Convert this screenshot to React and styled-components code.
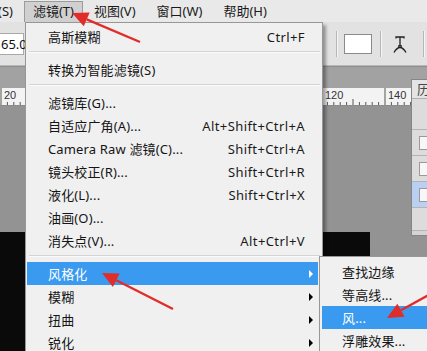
import React from "react";
import styled, { createGlobalStyle } from "styled-components";

const GlobalStyle = createGlobalStyle`
  html, body {
    margin: 0;
    padding: 0;
    overflow: hidden;
  }
  body {
    font-family: "Noto Sans", "Noto Sans CJK SC", sans-serif;
    font-size: 13px;
    color: #111;
  }
`;

const Screen = styled.div`
  position: relative;
  width: 427px;
  height: 351px;
  overflow: hidden;
  display: flex;
  flex-direction: column;
  background: #939393;
`;

const MenuBar = styled.div`
  display: flex;
  align-items: flex-end;
  height: 22px;
  background: #e9e9e9;
  margin-left: -37px;
  flex-shrink: 0;
`;

const MenuTitle = styled.div`
  height: 20px;
  line-height: 19px;
  padding: 0 8px;
  margin-right: ${(p) => p.$gap || 2}px;
  border: 1px solid ${(p) => (p.$active ? "#9c9c9c" : "transparent")};
  border-bottom: none;
  background: ${(p) => (p.$active ? "#d0d0d0" : "transparent")};
  color: #1a1a1a;
  white-space: nowrap;
`;

const OptionsBar = styled.div`
  display: flex;
  align-items: center;
  height: 44px;
  background: #e2e2e2;
  border-bottom: 1px solid #b9b9b9;
  flex-shrink: 0;
  box-sizing: border-box;
`;

const NumField = styled.div`
  width: 30px;
  height: 22px;
  margin-left: -6px;
  background: #fff;
  border: 1px solid #a9a9a9;
  line-height: 21px;
  padding-left: 6px;
  box-sizing: border-box;
  font-size: 13px;
`;

const RightTools = styled.div`
  margin-left: auto;
  display: flex;
  align-items: center;
  margin-right: 2px;
`;

const Divider = styled.div`
  width: 1px;
  height: 26px;
  background: #b6b6b6;
  border-right: 1px solid #f4f4f4;
  margin-right: ${(p) => p.$mr || 0}px;
`;

const Swatch = styled.div`
  width: 28px;
  height: 20px;
  margin: 0 8px 0 6px;
  background: #fff;
  border: 1px solid #8b8b8b;
  box-sizing: border-box;
`;

const IconSlot = styled.div`
  display: flex;
  margin: 0 16px 0 11px;
`;

const TabStrip = styled.div`
  height: 22px;
  background: #a2a2a2;
  border-top: 1px solid #8d8d8d;
  box-sizing: border-box;
  flex-shrink: 0;
`;

const Ruler = styled.div`
  position: relative;
  height: 18px;
  background: #f3f3f3;
  border-bottom: 1px solid #8a8a8a;
  box-sizing: border-box;
  flex-shrink: 0;
`;

const RulerLabel = styled.span`
  position: absolute;
  top: 1px;
  font-family: "Liberation Sans", sans-serif;
  font-size: 11px;
  color: #333;
`;

const Canvas = styled.div`
  flex: 1;
  display: flex;
  flex-direction: column;
  padding-top: 126px;
  background: #939393;
`;

const Document = styled.div`
  width: 370px;
  flex: 1;
  background: #0a0a0a;
`;

const FloatPanel = styled.div`
  position: absolute;
  left: 411px;
  top: 79px;
  width: 24px;
  height: 155px;
  background: #d4d4d4;
  border: 1px solid #868686;
  display: flex;
  flex-direction: column;
`;

const PanelHead = styled.div`
  height: 18px;
  line-height: 18px;
  padding-left: 5px;
  background: #e4e4e4;
  border-bottom: 1px solid #b0b0b0;
  color: #444;
`;

const PanelRow = styled.div`
  height: ${(p) => p.$h || 25}px;
  border-bottom: 1px solid #b4b4b4;
  background: ${(p) => (p.$sel ? "#b9d0f2" : "#dcdcdc")};
  display: flex;
  align-items: center;
  padding-left: 7px;
`;

const PanelBox = styled.div`
  width: 12px;
  height: 12px;
  background: #f7f7f7;
  border: 1px solid #9a9a9a;
`;

const Menu = styled.div`
  position: absolute;
  left: ${(p) => p.$left}px;
  top: ${(p) => p.$top}px;
  width: ${(p) => p.$width}px;
  height: 400px;
  background: #f0f0f0;
  border: 1px solid #979797;
  box-shadow: 3px 3px 3px rgba(0, 0, 0, 0.35);
  padding: ${(p) => p.$pad}px 0;
  box-sizing: border-box;
  z-index: 2;
`;

const Item = styled.div`
  height: 23px;
  display: flex;
  align-items: center;
  margin: 0 4px 0 ${(p) => p.$ml || 1}px;
  padding: 0 0 0 ${(p) => p.$pl || 21}px;
  background: ${(p) => (p.$hot ? "#3a9af0" : "transparent")};
  color: ${(p) => (p.$hot ? "#fff" : "#151515")};
  white-space: nowrap;
`;

const Label = styled.span`
  flex: 1;
  letter-spacing: 0.15px;
`;

const Shortcut = styled.span`
  margin-right: 13px;
  letter-spacing: 0.4px;
  color: #1a1a1a;
`;

const SubArrow = styled.span`
  width: 0;
  height: 0;
  margin-right: 5px;
  border-left: 4px solid ${(p) => (p.$hot ? "#fff" : "#000")};
  border-top: 4px solid transparent;
  border-bottom: 4px solid transparent;
`;

const Separator = styled.div`
  height: 10px;
  margin: 0 2px 0 3px;
  padding-top: 3px;
  box-sizing: border-box;
  &::before {
    content: "";
    display: block;
    border-top: 1px solid #d4d4d4;
    border-bottom: 1px solid #fbfbfb;
  }
`;

const Overlay = styled.svg`
  position: absolute;
  left: 0;
  top: 0;
  z-index: 5;
  pointer-events: none;
`;

const filterItems = [
  { label: "高斯模糊", key: "Ctrl+F" },
  "sep",
  { label: "转换为智能滤镜(S)" },
  "sep",
  { label: "滤镜库(G)..." },
  { label: "自适应广角(A)...", key: "Alt+Shift+Ctrl+A" },
  { label: "Camera Raw 滤镜(C)...", key: "Shift+Ctrl+A" },
  { label: "镜头校正(R)...", key: "Shift+Ctrl+R" },
  { label: "液化(L)...", key: "Shift+Ctrl+X" },
  { label: "油画(O)..." },
  { label: "消失点(V)...", key: "Alt+Ctrl+V" },
  "sep",
  { label: "风格化", sub: true, hot: true },
  { label: "模糊", sub: true },
  { label: "扭曲", sub: true },
  { label: "锐化", sub: true },
];

const stylizeItems = [
  { label: "查找边缘" },
  { label: "等高线..." },
  { label: "风...", hot: true },
  { label: "浮雕效果..." },
];

const RulerTicks = () => {
  const ticks = [];
  for (let u = 20; u <= 150; u += 2) {
    const x = 1 + (u - 20) * 3.2;
    const h = u % 20 === 0 ? 17 : u % 10 === 0 ? 6 : 3;
    ticks.push(<line key={u} x1={x} x2={x} y1={17 - h} y2={17} stroke="#555" strokeWidth="1" />);
  }
  return (
    <svg width="427" height="17" style={{ position: "absolute", left: 0, top: 0 }}>
      {ticks}
    </svg>
  );
};

const WarpIcon = () => (
  <svg width="14" height="20" viewBox="0 0 14 20">
    <path d="M3 4.5 V3 H11 V4.5 M7 3 V12 M5 12 H9" fill="none" stroke="#222" strokeWidth="1.3" />
    <path d="M1 18.5 Q7 8.5 13 18.5" fill="none" stroke="#222" strokeWidth="1.4" />
  </svg>
);

const Arrow = ({ x1, y1, x2, y2 }) => {
  const a = Math.atan2(y2 - y1, x2 - x1);
  const len = 16;
  const w = 7.5;
  const bx = x2 - Math.cos(a) * len;
  const by = y2 - Math.sin(a) * len;
  const px = -Math.sin(a) * w;
  const py = Math.cos(a) * w;
  return (
    <g>
      <line x1={x1} y1={y1} x2={bx} y2={by} stroke="#e12d2a" strokeWidth="2.4" />
      <polygon
        points={`${x2},${y2} ${bx + px},${by + py} ${bx - px},${by - py}`}
        fill="#e12d2a"
      />
    </g>
  );
};

export default function App() {
  return (
    <>
      <GlobalStyle />
      <Screen>
        <MenuBar>
          <MenuTitle>选择(S)</MenuTitle>
          <MenuTitle $active $gap={2}>滤镜(T)</MenuTitle>
          <MenuTitle $gap={3}>视图(V)</MenuTitle>
          <MenuTitle $gap={3}>窗口(W)</MenuTitle>
          <MenuTitle>帮助(H)</MenuTitle>
        </MenuBar>
        <OptionsBar>
          <NumField>65.0</NumField>
          <RightTools>
            <Divider />
            <Swatch />
            <Divider />
            <IconSlot>
              <WarpIcon />
            </IconSlot>
            <Divider />
          </RightTools>
        </OptionsBar>
        <TabStrip />
        <Ruler>
          <RulerTicks />
          <RulerLabel style={{ left: 4 }}>20</RulerLabel>
          <RulerLabel style={{ left: 325 }}>120</RulerLabel>
          <RulerLabel style={{ left: 388 }}>140</RulerLabel>
        </Ruler>
        <Canvas>
          <Document />
        </Canvas>

        <FloatPanel>
          <PanelHead>历</PanelHead>
          <PanelRow $h={30} />
          <PanelRow>
            <PanelBox />
          </PanelRow>
          <PanelRow>
            <PanelBox />
          </PanelRow>
          <PanelRow $sel>
            <PanelBox />
          </PanelRow>
          <PanelRow $h={22} />
        </FloatPanel>

        <Menu $left={25} $top={22} $width={298} $pad={2}>
          {filterItems.map((it, i) =>
            it === "sep" ? (
              <Separator key={i} />
            ) : (
              <Item key={i} $hot={it.hot}>
                <Label>{it.label}</Label>
                {it.key && <Shortcut>{it.key}</Shortcut>}
                {it.sub && <SubArrow $hot={it.hot} />}
              </Item>
            )
          )}
        </Menu>

        <Menu $left={319} $top={256} $width={120} $pad={3}>
          {stylizeItems.map((it, i) => (
            <Item key={i} $hot={it.hot} $ml={2} $pl={20}>
              <Label>{it.label}</Label>
            </Item>
          ))}
        </Menu>

        <Overlay width="427" height="351">
          <Arrow x1={140} y1={42} x2={72} y2={13} />
          <Arrow x1={173} y1={309} x2={102} y2={273} />
          <Arrow x1={432} y1={293} x2={387} y2={318} />
        </Overlay>
      </Screen>
    </>
  );
}
